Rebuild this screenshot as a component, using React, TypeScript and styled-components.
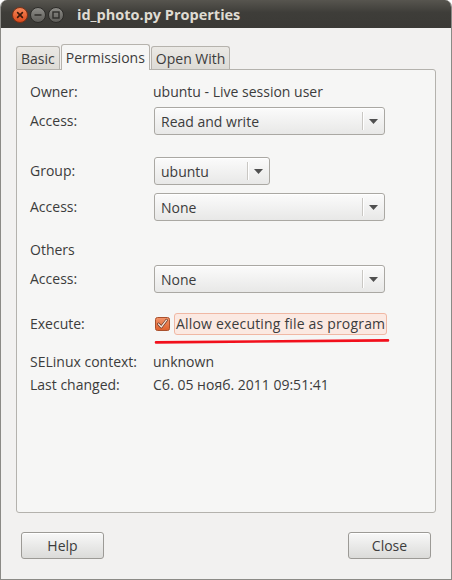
import React from 'react';
import styled, { createGlobalStyle } from 'styled-components';

const GlobalStyle = createGlobalStyle`
  html, body { margin: 0; padding: 0; background: #ffffff; }
  #root { width: 452px; height: 580px; }
  * { box-sizing: border-box; }
`;

const Window = styled.div`
  width: 452px;
  height: 580px;
  display: flex;
  flex-direction: column;
  background: #f2f1f0;
  border: 1px solid #8b8a86;
  border-top: none;
  border-radius: 7px 7px 0 0;
  overflow: hidden;
  font-family: "Open Sans", "DejaVu Sans", sans-serif;
  font-size: 14px;
  color: #3c3c3c;
`;

const TitleBar = styled.div`
  height: 28px;
  flex: none;
  display: flex;
  align-items: center;
  padding: 1px 0 0 11px;
  background: linear-gradient(#57554f, #3e3d39 45%, #3b3a36);
`;

const WinButtons = styled.div`
  display: flex;
  gap: 2px;
`;

const Title = styled.span`
  margin-left: 13px;
  font-weight: 700;
  font-size: 14.5px;
  color: #dfdbd2;
`;

const Body = styled.div`
  flex: 1;
  display: flex;
  flex-direction: column;
  padding: 16px 15px 0;
`;

const TabRow = styled.div`
  display: flex;
  align-items: flex-end;
  gap: 1px;
  height: 26px;
  margin-bottom: -1px;
  position: relative;
  z-index: 1;
`;

const Tab = styled.div<{ $active?: boolean }>`
  display: flex;
  align-items: center;
  justify-content: center;
  padding: 0 4px;
  height: ${p => (p.$active ? 26 : 23)}px;
  margin-bottom: ${p => (p.$active ? 0 : 1)}px;
  border: 1px solid #b6b3ad;
  border-bottom: none;
  border-radius: 3px 3px 0 0;
  background: ${p => (p.$active ? '#f6f6f5' : 'linear-gradient(#ebe9e5, #dddbd6)')};
  color: #3c3c3c;
`;

const Frame = styled.div`
  flex: 1;
  display: flex;
  flex-direction: column;
  padding: 11px 13px 0;
  background: #f6f6f5;
  border: 1px solid #b4b2ad;
  border-radius: 0 3px 3px 3px;
`;

const Field = styled.div<{ $top: number; $h: number }>`
  display: grid;
  grid-template-columns: 123px 1fr;
  align-items: center;
  margin-top: ${p => p.$top}px;
  height: ${p => p.$h}px;
  line-height: 20px;
`;

const Value = styled.div`
  position: relative;
  display: flex;
  align-items: center;
`;

const Combo = styled.div<{ $w: number }>`
  width: ${p => p.$w}px;
  height: 28px;
  margin-left: 1px;
  display: flex;
  align-items: center;
  border: 1px solid #aaa8a3;
  border-radius: 3px;
  background: linear-gradient(#fbfbfb, #e8e8e7);
  box-shadow: inset 0 1px 0 #ffffff;
`;

const ComboText = styled.span`
  flex: 1;
  padding: 1px 0 0 6px;
`;

const ComboDivider = styled.span`
  width: 1px;
  align-self: stretch;
  margin: 4px 0;
  background: #c9c7c3;
  box-shadow: 1px 0 0 #ffffff;
`;

const ComboArrow = styled.span`
  width: 21px;
  display: flex;
  justify-content: center;
  align-items: center;
`;

const CheckLabel = styled.span`
  margin-left: 4px;
  height: 22px;
  padding: 0 1px;
  line-height: 20px;
  letter-spacing: 0.18px;
  border: 1px solid #f0b8a4;
  border-radius: 3px;
  background: #fbe9e2;
`;

const Marker = styled.svg`
  position: absolute;
  left: 2px;
  top: calc(100% + 4px);
  overflow: visible;
`;

const ButtonRow = styled.div`
  display: flex;
  justify-content: space-between;
  padding: 19px 5px 20px;
`;

const Button = styled.button`
  width: 83px;
  height: 27px;
  padding: 0;
  border: 1px solid #9c9a96;
  border-radius: 3px;
  background: linear-gradient(#f8f8f8, #dbdbd9);
  box-shadow: inset 0 1px 0 #ffffff;
  font-family: inherit;
  font-size: 14px;
  color: #3c3c3c;
`;

const CloseIcon = () => (
  <svg width="16" height="16" viewBox="0 0 16 16">
    <defs>
      <linearGradient id="cg" x1="0" y1="0" x2="0" y2="1">
        <stop offset="0" stopColor="#f6895a" />
        <stop offset="1" stopColor="#d8471a" />
      </linearGradient>
    </defs>
    <circle cx="8" cy="8" r="7.5" fill="url(#cg)" stroke="#7a3016" strokeWidth="1" />
    <path d="M5.6 5.6 L10.4 10.4 M10.4 5.6 L5.6 10.4" stroke="#3b1a0c" strokeWidth="1.6" strokeLinecap="round" />
  </svg>
);

const GreyIcon = ({ kind }: { kind: 'min' | 'max' }) => (
  <svg width="16" height="16" viewBox="0 0 16 16">
    <defs>
      <linearGradient id={`g${kind}`} x1="0" y1="0" x2="0" y2="1">
        <stop offset="0" stopColor="#8e8d89" />
        <stop offset="1" stopColor="#5c5b57" />
      </linearGradient>
    </defs>
    <circle cx="8" cy="8" r="7.5" fill={`url(#g${kind})`} stroke="#2c2b28" strokeWidth="1" />
    {kind === 'min' ? (
      <path d="M4.5 8 H11.5" stroke="#2e2d2a" strokeWidth="1.6" />
    ) : (
      <rect x="5" y="5" width="6" height="6" fill="none" stroke="#2e2d2a" strokeWidth="1.4" />
    )}
  </svg>
);

const Arrow = () => (
  <svg width="9" height="5" viewBox="0 0 9 5">
    <path d="M0 0 H9 L4.5 5 Z" fill="#505050" />
  </svg>
);

const CheckBox = () => (
  <svg width="15" height="14" viewBox="0 0 15 14" style={{ marginLeft: 2 }}>
    <defs>
      <linearGradient id="cb" x1="0" y1="0" x2="0" y2="1">
        <stop offset="0" stopColor="#f2956c" />
        <stop offset="1" stopColor="#df5f2c" />
      </linearGradient>
    </defs>
    <rect x="0.5" y="0.5" width="14" height="13" rx="2" fill="url(#cb)" stroke="#a9502c" />
    <path d="M3.5 7 L6.3 10 L11.5 3.2" fill="none" stroke="#5a3426" strokeWidth="2.6" strokeLinecap="round" strokeLinejoin="round" />
    <path d="M3.5 7 L6.3 10 L11.5 3.2" fill="none" stroke="#fbe4d8" strokeWidth="1.3" strokeLinecap="round" strokeLinejoin="round" />
  </svg>
);

const ComboBox = ({ w, text }: { w: number; text: string }) => (
  <Combo $w={w}>
    <ComboText>{text}</ComboText>
    <ComboDivider />
    <ComboArrow>
      <Arrow />
    </ComboArrow>
  </Combo>
);

export default function App() {
  return (
    <>
      <GlobalStyle />
      <Window>
        <TitleBar>
          <WinButtons>
            <CloseIcon />
            <GreyIcon kind="min" />
            <GreyIcon kind="max" />
          </WinButtons>
          <Title>id_photo.py Properties</Title>
        </TitleBar>
        <Body>
          <TabRow>
            <Tab>Basic</Tab>
            <Tab $active>Permissions</Tab>
            <Tab>Open With</Tab>
          </TabRow>
          <Frame>
            <Field $top={0} $h={22}>
              <span>Owner:</span>
              <Value>ubuntu - Live session user</Value>
            </Field>
            <Field $top={4} $h={28}>
              <span>Access:</span>
              <Value>
                <ComboBox w={231} text="Read and write" />
              </Value>
            </Field>
            <Field $top={22} $h={28}>
              <span>Group:</span>
              <Value>
                <ComboBox w={116} text="ubuntu" />
              </Value>
            </Field>
            <Field $top={8} $h={28}>
              <span>Access:</span>
              <Value>
                <ComboBox w={231} text="None" />
              </Value>
            </Field>
            <Field $top={18} $h={22}>
              <span>Others</span>
            </Field>
            <Field $top={4} $h={28}>
              <span>Access:</span>
              <Value>
                <ComboBox w={231} text="None" />
              </Value>
            </Field>
            <Field $top={20} $h={22}>
              <span>Execute:</span>
              <Value>
                <CheckBox />
                <CheckLabel>Allow executing file as program</CheckLabel>
                <Marker width="234" height="5" viewBox="0 0 234 5">
                  <path d="M1 3.4 Q110 2.6 233 1.4" fill="none" stroke="#f2101c" strokeWidth="2.6" strokeLinecap="round" />
                </Marker>
              </Value>
            </Field>
            <Field $top={16} $h={22}>
              <span>SELinux context:</span>
              <Value>unknown</Value>
            </Field>
            <Field $top={1} $h={22}>
              <span>Last changed:</span>
              <Value>Сб. 05 нояб. 2011 09:51:41</Value>
            </Field>
          </Frame>
          <ButtonRow>
            <Button>Help</Button>
            <Button>Close</Button>
          </ButtonRow>
        </Body>
      </Window>
    </>
  );
}
